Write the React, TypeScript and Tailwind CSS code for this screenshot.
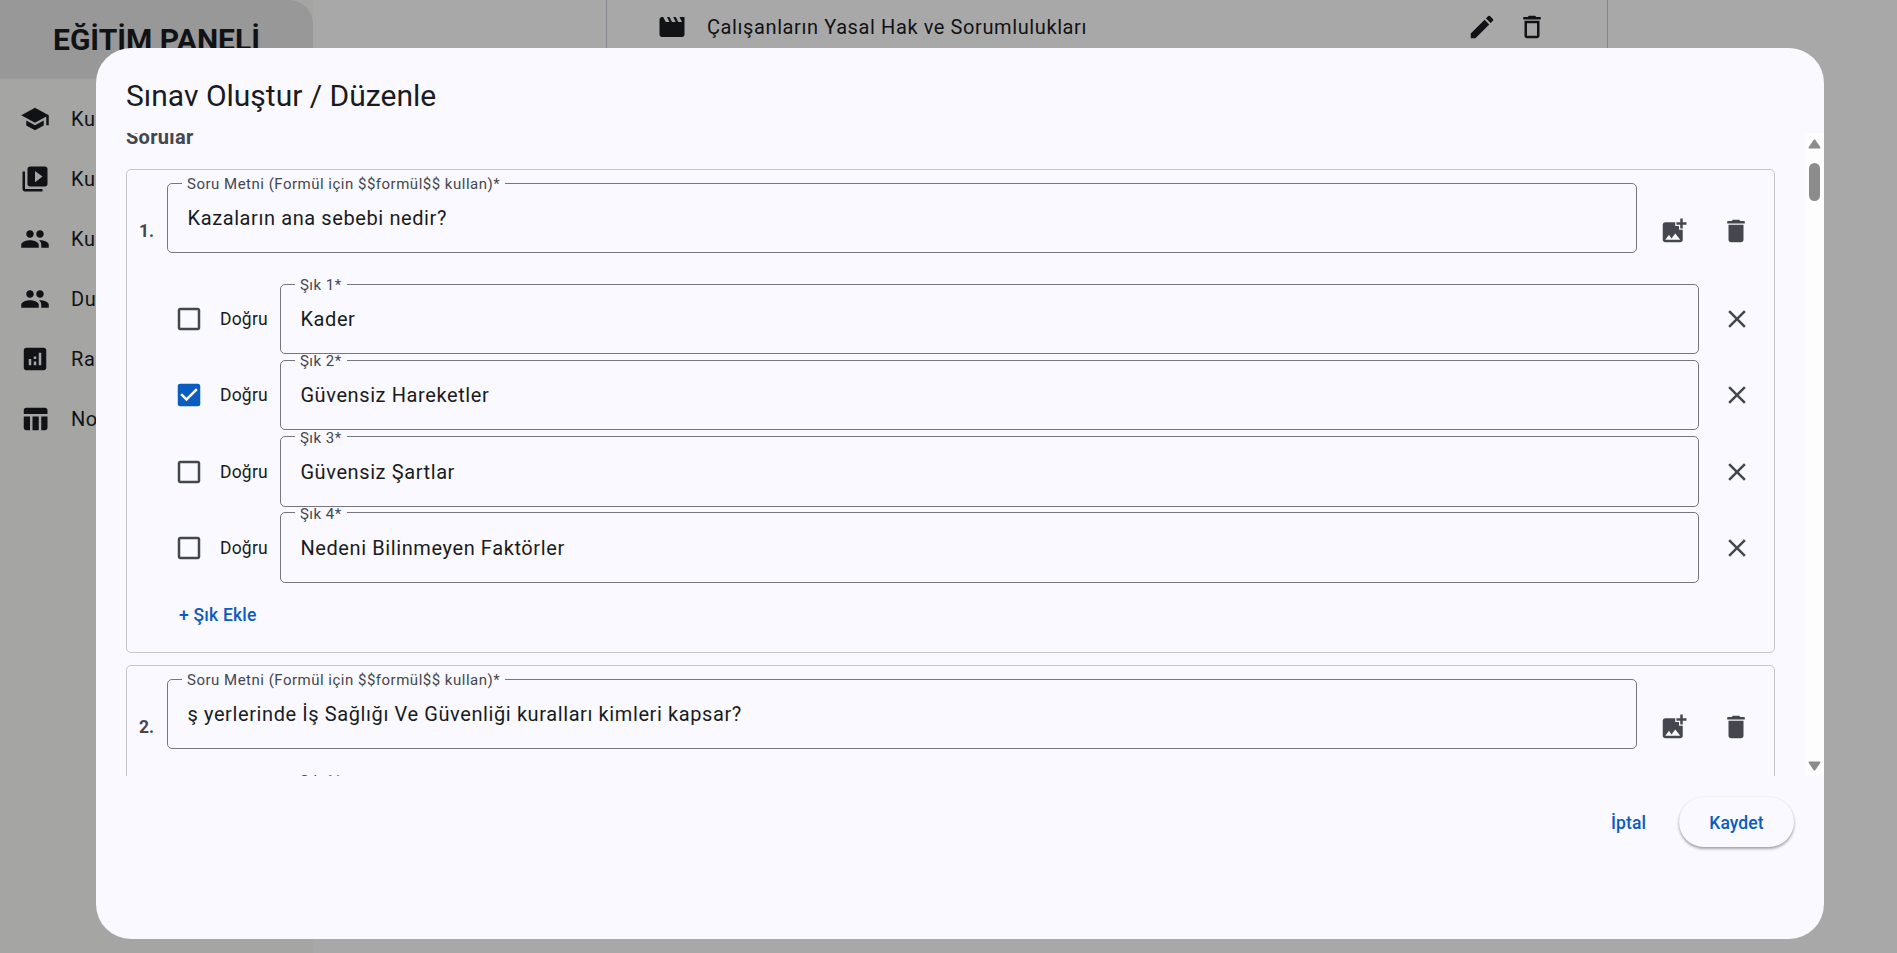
import {
  MdAddPhotoAlternate,
  MdAnalytics,
  MdCheckBox,
  MdCheckBoxOutlineBlank,
  MdClose,
  MdDelete,
  MdDeleteOutline,
  MdEdit,
  MdMovie,
  MdPeople,
  MdSchool,
  MdTableChart,
  MdVideoLibrary,
} from "react-icons/md";

const navItems = [
  { label: "Kurslar", icon: MdSchool },
  { label: "Kurs İçerikleri", icon: MdVideoLibrary },
  { label: "Kullanıcılar", icon: MdPeople },
  { label: "Duyurular", icon: MdPeople },
  { label: "Raporlar", icon: MdAnalytics },
  { label: "Notlar", icon: MdTableChart },
];

const questions = [
  {
    text: "Kazaların ana sebebi nedir?",
    options: [
      { text: "Kader", correct: false },
      { text: "Güvensiz Hareketler", correct: true },
      { text: "Güvensiz Şartlar", correct: false },
      { text: "Nedeni Bilinmeyen Faktörler", correct: false },
    ],
  },
  {
    text: "ş yerlerinde İş Sağlığı Ve Güvenliği kuralları kimleri kapsar?",
    options: [{ text: "", correct: false }],
  },
];

function OutlinedField({ label, value }: { label: string; value: string }) {
  return (
    <div className="relative h-[70px] min-w-0 flex-1">
      <fieldset className="absolute inset-x-0 top-[-8px] bottom-0 rounded-[5px] border border-[#74777f]">
        <legend className="ml-[14px] h-[16px] px-[5px] text-[15px] leading-[18px] tracking-[0.5px] text-[#44474e]">
          {label}
        </legend>
      </fieldset>
      <div className="relative pl-[20.5px] pt-[21px] text-[20px] leading-[28px] tracking-[0.6px] text-[#1a1b20]">
        {value}
      </div>
    </div>
  );
}

function OptionRow({ label, text, correct }: { label: string; text: string; correct: boolean }) {
  return (
    <div className="mb-[6.25px] flex items-center pl-[47px] pr-[22px]">
      {correct ? (
        <MdCheckBox className="h-[30px] w-[30px] text-[#0b5cbf]" />
      ) : (
        <MdCheckBoxOutlineBlank className="h-[30px] w-[30px] text-[#44474e]" />
      )}
      <span className="ml-[16px] mr-[12px] text-[17.5px] leading-[24px] tracking-[0.2px] text-[#1a1b20]">Doğru</span>
      <OutlinedField label={label} value={text} />
      <MdClose className="ml-[23px] h-[30px] w-[30px] text-[#44474e]" />
    </div>
  );
}

function QuestionCard({ index, text, options }: { index: number; text: string; options: { text: string; correct: boolean }[] }) {
  return (
    <div className="mb-[12px] rounded-[5px] border border-[#c4c6d0] pt-[13px] pb-[19px]">
      <div className="mb-[6px] flex items-center pl-[12px] pr-[23px]">
        <span className="w-[28px] text-[17.5px] font-bold leading-[24px] text-[#44474e]">{index}.</span>
        <div className="flex min-w-0 flex-1 pb-[25px]">
          <OutlinedField label="Soru Metni (Formül için $$formül$$ kullan)*" value={text} />
        </div>
        <div className="ml-[22px] flex items-center gap-[32px]">
          <MdAddPhotoAlternate className="h-[30px] w-[30px] text-[#44474e]" />
          <MdDelete className="h-[30px] w-[30px] text-[#44474e]" />
        </div>
      </div>
      {options.map((o, i) => (
        <OptionRow key={i} label={`Şık ${i + 1}*`} text={o.text} correct={o.correct} />
      ))}
      <div className="pl-[52px] pt-[7px]">
        <span className="block h-[37px] text-[17.5px] font-medium leading-[38px] tracking-[0.2px] text-[#0b5cbf]">+ Şık Ekle</span>
      </div>
    </div>
  );
}

function FakeScrollbar() {
  return (
    <div className="flex h-full w-[19px] flex-col items-center bg-[#fdfdfd]">
      <svg viewBox="0 0 14 11" className="mt-[6px] h-[10px] w-[13px] fill-[#8c8c8c] stroke-[#8c8c8c]">
        <path d="M7 1.5 L12.5 9.5 L1.5 9.5 Z" strokeLinejoin="round" strokeWidth="2" />
      </svg>
      <div className="mt-[14px] h-[38px] w-[11px] rounded-full bg-[#8c8c8c]" />
      <div className="flex-1" />
      <svg viewBox="0 0 14 11" className="mb-[5px] h-[10px] w-[13px] fill-[#8c8c8c] stroke-[#8c8c8c]">
        <path d="M1.5 1.5 L12.5 1.5 L7 9.5 Z" strokeLinejoin="round" strokeWidth="2" />
      </svg>
    </div>
  );
}

export default function App() {
  return (
    <div className="relative flex h-[953px] w-[1897px] overflow-hidden bg-[#f8f8fa] font-['Roboto',sans-serif] text-[#1a1b20]">
      {/* page behind the dialog */}
      <aside className="w-[313px] shrink-0 bg-[#f4f4f2]">
        <div className="flex h-[79px] items-center justify-center rounded-tr-[24px] bg-[#e0e0e2]">
          <h1 className="text-[30px] font-bold text-[#1a1b20]">EĞİTİM PANELİ</h1>
        </div>
        <nav className="pt-[10px]">
          {navItems.map((item) => (
            <div key={item.label} className="flex h-[60px] items-center pl-[20px]">
              <item.icon className="h-[30px] w-[30px] text-[#1a1b20]" />
              <span className="ml-[21px] text-[20px] tracking-[0.6px]">{item.label}</span>
            </div>
          ))}
        </nav>
      </aside>
      <main className="ml-[293px] h-[800px] w-[1002px] border-x border-[#c4c6d0]">
        <div className="flex h-[54px] items-center pl-[50px]">
          <MdMovie className="h-[30px] w-[30px]" />
          <span className="ml-[20px] text-[20px] tracking-[0.6px]">Çalışanların Yasal Hak ve Sorumlulukları</span>
          <div className="ml-[380px] flex gap-[20px]">
            <MdEdit className="h-[30px] w-[30px]" />
            <MdDeleteOutline className="h-[30px] w-[30px]" />
          </div>
        </div>
      </main>

      <div className="absolute inset-0 bg-black/32" />

      <div className="absolute top-[48px] left-[96px] flex h-[891px] w-[1728px] flex-col overflow-hidden rounded-[35px] bg-[#f9f9ff]">
        <h2 className="px-[30px] pt-[28px] pb-[17px] text-[30px] leading-[40px] text-[#1a1b20]">Sınav Oluştur / Düzenle</h2>
        <div className="flex h-[643px] shrink-0">
          <div className="min-w-0 flex-1 overflow-hidden px-[30px]">
            <div className="-mt-[10.5px]">
              <h3 className="mb-[18.5px] h-[28px] text-[20px] font-bold leading-[28px] tracking-[0.3px] text-[#44474e]">Sorular</h3>
              {questions.map((q, i) => (
                <QuestionCard key={i} index={i + 1} text={q.text} options={q.options} />
              ))}
            </div>
          </div>
          <FakeScrollbar />
        </div>
        <div className="flex items-center justify-end gap-[18px] pt-[21px] pr-[30px]">
          <button className="h-[50px] px-[15px] pt-[2px] text-[17.5px] font-medium tracking-[0.1px] text-[#0b5cbf]">İptal</button>
          <button className="h-[50px] w-[115px] rounded-full bg-[#f9f9ff] pt-[2px] text-[17.5px] font-medium tracking-[0.1px] text-[#0b5cbf] shadow-[0_2px_3px_rgba(0,0,0,0.3),0_1px_3px_rgba(0,0,0,0.1)]">
            Kaydet
          </button>
        </div>
      </div>
    </div>
  );
}
